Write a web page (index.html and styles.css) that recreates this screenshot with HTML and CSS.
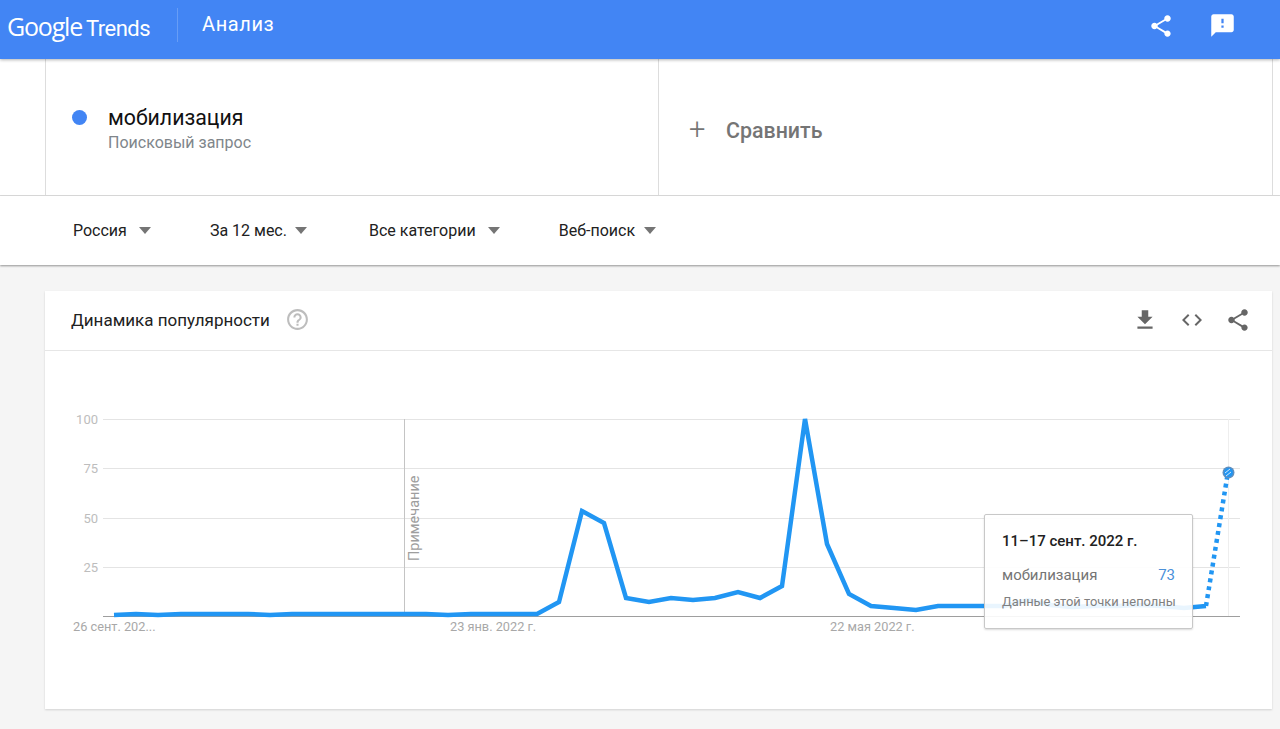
FILE: index.html
```html
<!DOCTYPE html>
<html lang="ru">
<head>
    <meta charset="UTF-8">
    <meta name="viewport" content="width=device-width, initial-scale=1.0">
    <title>Google Trends | Анализ</title>
    <link rel="stylesheet" href="styles.css">
</head>
<body>
<header class="app-bar">
    <div class="logo"><span>Google</span><span class="logo-product">Trends</span></div>
    <div class="app-divider"></div>
    <div class="app-title">Анализ</div>
    <div class="app-actions">
        <svg class="icon-share-top" viewBox="0 0 24 24"><path d="M18 16.08c-.76 0-1.44.3-1.96.77L8.91 12.7c.05-.23.09-.46.09-.7s-.04-.47-.09-.7l7.05-4.11c.54.5 1.25.81 2.04.81 1.66 0 3-1.34 3-3s-1.34-3-3-3-3 1.34-3 3c0 .24.04.47.09.7L8.04 9.81C7.5 9.31 6.79 9 6 9c-1.66 0-3 1.34-3 3s1.34 3 3 3c.79 0 1.5-.31 2.04-.81l7.12 4.16c-.05.21-.08.43-.08.65 0 1.61 1.31 2.92 2.92 2.92 1.61 0 2.92-1.31 2.92-2.92s-1.31-2.92-2.92-2.92z"/></svg>
        <svg class="icon-feedback" viewBox="0 0 24 24"><path d="M20 2H4c-1.1 0-1.99.9-1.99 2L2 22l4-4h14c1.1 0 2-.9 2-2V4c0-1.1-.9-2-2-2zm-7 12h-2v-2h2v2zm0-4h-2V6h2v4z"/></svg>
    </div>
</header>

<section class="search-row">
    <div class="search-cell term-cell">
        <span class="term-dot"></span>
        <div>
            <div class="term-name">мобилизация</div>
            <div class="term-type">Поисковый запрос</div>
        </div>
    </div>
    <div class="search-cell compare-cell">
        <span class="compare-plus">+</span>
        <span class="compare-label">Сравнить</span>
    </div>
</section>

<nav class="filters">
    <div class="filter filter-geo">Россия <i class="arrow"></i></div>
    <div class="filter filter-time">За 12 мес. <i class="arrow"></i></div>
    <div class="filter filter-cat">Все категории <i class="arrow"></i></div>
    <div class="filter filter-type">Веб-поиск <i class="arrow"></i></div>
</nav>

<main class="content">
    <section class="card">
        <div class="card-header">
            <h2 class="card-title">Динамика популярности</h2>
            <svg class="icon-help" viewBox="0 0 24 24"><path d="M11 18h2v-2h-2v2zm1-16C6.48 2 2 6.48 2 12s4.48 10 10 10 10-4.48 10-10S17.52 2 12 2zm0 18c-4.41 0-8-3.59-8-8s3.59-8 8-8 8 3.59 8 8-3.59 8-8 8zm0-14c-2.21 0-4 1.79-4 4h2c0-1.1.9-2 2-2s2 .9 2 2c0 2-3 1.75-3 5h2c0-2.25 3-2.5 3-5 0-2.21-1.79-4-4-4z"/></svg>
            <div class="card-actions">
                <svg class="icon-download" viewBox="0 0 24 24"><path d="M19 9h-4V3H9v6H5l7 7 7-7zM5 18v2h14v-2H5z"/></svg>
                <svg class="icon-embed" viewBox="0 0 24 24"><path d="M9.4 16.6L4.8 12l4.6-4.6L8 6l-6 6 6 6 1.4-1.4zm5.2 0l4.6-4.6-4.6-4.6L16 6l6 6-6 6-1.4-1.4z"/></svg>
                <svg class="icon-share" viewBox="0 0 24 24"><path d="M18 16.08c-.76 0-1.44.3-1.96.77L8.91 12.7c.05-.23.09-.46.09-.7s-.04-.47-.09-.7l7.05-4.11c.54.5 1.25.81 2.04.81 1.66 0 3-1.34 3-3s-1.34-3-3-3-3 1.34-3 3c0 .24.04.47.09.7L8.04 9.81C7.5 9.31 6.79 9 6 9c-1.66 0-3 1.34-3 3s1.34 3 3 3c.79 0 1.5-.31 2.04-.81l7.12 4.16c-.05.21-.08.43-.08.65 0 1.61 1.31 2.92 2.92 2.92 1.61 0 2.92-1.31 2.92-2.92s-1.31-2.92-2.92-2.92z"/></svg>
            </div>
        </div>
        <div class="chart">
            <svg class="chart-svg" viewBox="45 351 1227 358">
                <g class="grid">
                    <line x1="103" y1="419.5" x2="1240" y2="419.5"/>
                    <line x1="103" y1="468.5" x2="1240" y2="468.5"/>
                    <line x1="103" y1="518.5" x2="1240" y2="518.5"/>
                    <line x1="103" y1="567.5" x2="1240" y2="567.5"/>
                </g>
                <line class="note-line" x1="404.5" y1="419" x2="404.5" y2="616"/>
                <line class="last-line" x1="1228.5" y1="419" x2="1228.5" y2="616"/>
                <line class="baseline" x1="103" y1="616.5" x2="1240" y2="616.5"/>
                <g class="y-labels">
                    <text x="98" y="424">100</text>
                    <text x="98" y="473">75</text>
                    <text x="98" y="523">50</text>
                    <text x="98" y="572">25</text>
                </g>
                <g class="x-labels">
                    <text x="73" y="631">26 сент. 202...</text>
                    <text x="450" y="631">23 янв. 2022 г.</text>
                    <text x="830" y="631">22 мая 2022 г.</text>
                </g>
                <text class="note-label" transform="translate(418.5 561) rotate(-90)">Примечание</text>
                <polyline class="series" points="114,615 136,614 158,615 181,614 203,614 225,614 248,614 270,615 292,614 315,614 337,614 359,614 381,614 404,614 426,614 448,615 471,614 493,614 515,614 537,614 559,602 582,511 604,523 626,598 649,602 671,598 693,600 715,598 738,592 760,598 782,586 805,419 827,544 849,594 871,606 894,608 916,610 938,606 961,606 983,606 1005,606 1028,600 1050,605 1072,607 1095,606 1117,606 1139,605 1161,606 1184,608 1206,606"/>
                <line class="series-partial" x1="1206" y1="606" x2="1228" y2="472"/>
                <circle class="marker-halo" cx="1228.5" cy="472.5" r="6"/>
                <circle class="marker" cx="1228.5" cy="472.5" r="4.5"/>
                <path class="marker-stripes" d="M1225 473l5-4M1226 476l5-4"/>
            </svg>
            <div class="tooltip">
                <div class="tooltip-date">11–17 сент. 2022 г.</div>
                <div class="tooltip-row"><span>мобилизация</span><span class="tooltip-value">73</span></div>
                <div class="tooltip-note">Данные этой точки неполны</div>
            </div>
        </div>
    </section>
</main>
</body>
</html>
```

FILE: styles.css
```css
* {
    box-sizing: border-box;
}

html, body {
    height: 100%;
}

body {
    display: flex;
    flex-direction: column;
    margin: 0;
    overflow: hidden;
    font-family: Roboto, "Liberation Sans", sans-serif;
    background: #f5f5f5;
    color: #212121;
}

svg {
    display: block;
}

/* top bar */
.app-bar {
    position: relative;
    z-index: 3;
    display: flex;
    align-items: center;
    height: 59px;
    padding-left: 7px;
    background: #4285f4;
    box-shadow: 0 1px 3px rgba(0, 0, 0, .3);
    color: #fff;
}

.logo {
    display: flex;
    align-items: baseline;
    width: 144px;
    margin-top: -7px;
    font-family: "Open Sans", sans-serif;
    font-size: 25px;
    letter-spacing: -1.2px;
}

.logo-product {
    margin-left: 4px;
    font-family: Roboto, sans-serif;
    font-size: 22px;
    font-weight: 400;
    letter-spacing: -.5px;
}

.app-divider {
    width: 1px;
    height: 34px;
    margin: -9px 24px 0 26px;
    background: rgba(255, 255, 255, .2);
}

.app-title {
    margin-top: -11px;
    font-size: 20px;
    letter-spacing: .6px;
}

.app-actions {
    display: flex;
    align-items: center;
    gap: 35px;
    margin: -8px 44px 0 auto;
    fill: #fff;
}

.icon-share-top {
    width: 26px;
    height: 26px;
}

.icon-feedback {
    width: 27px;
    height: 27px;
}

/* search term row */
.search-row {
    display: flex;
    flex: none;
    height: 137px;
    padding: 0 7px 0 45px;
    background: #fff;
    border-bottom: 1px solid #ddd;
}

.search-cell {
    display: flex;
    align-items: center;
    border-left: 1px solid #ddd;
}

.term-cell {
    width: 613px;
    padding: 3px 0 0 26px;
}

.term-dot {
    flex: none;
    width: 15px;
    height: 15px;
    margin: -23px 21px 0 0;
    border-radius: 50%;
    background: #4285f4;
}

.term-name {
    font-size: 21.3px;
    line-height: 26px;
    color: #111;
}

.term-type {
    margin-top: 2px;
    font-size: 16px;
    line-height: 20px;
    color: #80868b;
}

.compare-cell {
    flex: 1;
    padding: 7px 0 0 30px;
    border-right: 1px solid #ddd;
    color: #757575;
}

.compare-plus {
    width: 37px;
    margin-top: -3px;
    font-size: 29px;
    font-weight: 300;
}

.compare-label {
    font-size: 21.4px;
    font-weight: 500;
}

/* filter row */
.filters {
    position: relative;
    z-index: 2;
    display: flex;
    flex: none;
    align-items: center;
    height: 69px;
    padding-left: 73px;
    background: #fff;
    box-shadow: 0 1px 2px rgba(0, 0, 0, .4);
}

.filter {
    display: flex;
    align-items: center;
    gap: 12px;
    margin-right: 59px;
    font-size: 16px;
    color: #212121;
}

.filter-time {
    margin-right: 62px;
    gap: 8px;
}

.filter-type {
    gap: 9px;
}

.arrow {
    width: 0;
    height: 0;
    border-left: 6px solid transparent;
    border-right: 6px solid transparent;
    border-top: 7px solid #757575;
}

/* card */
.content {
    flex: 1;
    padding: 26px 8px 20px 45px;
}

.card {
    display: flex;
    flex-direction: column;
    height: 418px;
    background: #fff;
    box-shadow: 0 1px 2px rgba(0, 0, 0, .15);
}

.card-header {
    display: flex;
    flex: none;
    align-items: center;
    height: 60px;
    padding: 0 21px 0 26px;
    border-bottom: 1px solid #e6e6e6;
}

.card-title {
    margin: -2px 0 0;
    font-size: 17px;
    font-weight: 400;
    color: #212121;
}

.icon-help {
    width: 25px;
    height: 25px;
    margin: -2px 0 0 15px;
    fill: #bdbdbd;
}

.card-actions {
    display: flex;
    align-items: center;
    gap: 21px;
    margin: -2px 0 0 auto;
    fill: #666;
}

.icon-download,
.icon-share {
    width: 26px;
    height: 26px;
}

.icon-download {
    margin-right: 1px;
}

.icon-embed {
    width: 24px;
    height: 24px;
}

/* chart */
.chart {
    position: relative;
    flex: 1;
}

.chart-svg {
    width: 100%;
    height: 100%;
}

.grid line {
    stroke: #e4e4e4;
}

.baseline {
    stroke: #9e9e9e;
}

.note-line {
    stroke: #c4c4c4;
}

.last-line {
    stroke: #eee;
}

.y-labels text {
    font-size: 13px;
    fill: #bdbdbd;
    text-anchor: end;
}

.x-labels text {
    font-size: 12.75px;
    fill: #a8a8a8;
}

.note-label {
    font-size: 14.5px;
    fill: #9e9e9e;
}

.series {
    fill: none;
    stroke: #2196f3;
    stroke-width: 4.5;
    stroke-linejoin: miter;
}

.series-partial {
    stroke: #2196f3;
    stroke-width: 4.5;
    stroke-dasharray: 4 4;
}

.marker-halo {
    fill: #5f8fbf;
}

.marker {
    fill: #2196f3;
}

.marker-stripes {
    fill: none;
    stroke: #cfe6fb;
    stroke-width: 1;
}

.tooltip {
    position: absolute;
    left: 939px;
    top: 163px;
    width: 209px;
    height: 115px;
    padding: 17px 17px;
    background: rgba(255, 255, 255, .9);
    border: 1px solid #c8c8c8;
    border-radius: 2px;
    box-shadow: 0 1px 2px rgba(0, 0, 0, .15);
}

.tooltip-date {
    font-size: 15px;
    font-weight: 500;
    line-height: 18px;
    color: #212121;
}

.tooltip-row {
    display: flex;
    justify-content: space-between;
    margin-top: 16px;
    font-size: 15px;
    line-height: 18px;
    color: #757575;
}

.tooltip-value {
    color: #4a90d9;
}

.tooltip-note {
    margin-top: 10px;
    font-size: 12.9px;
    line-height: 16px;
    white-space: nowrap;
    color: #808080;
}
```
